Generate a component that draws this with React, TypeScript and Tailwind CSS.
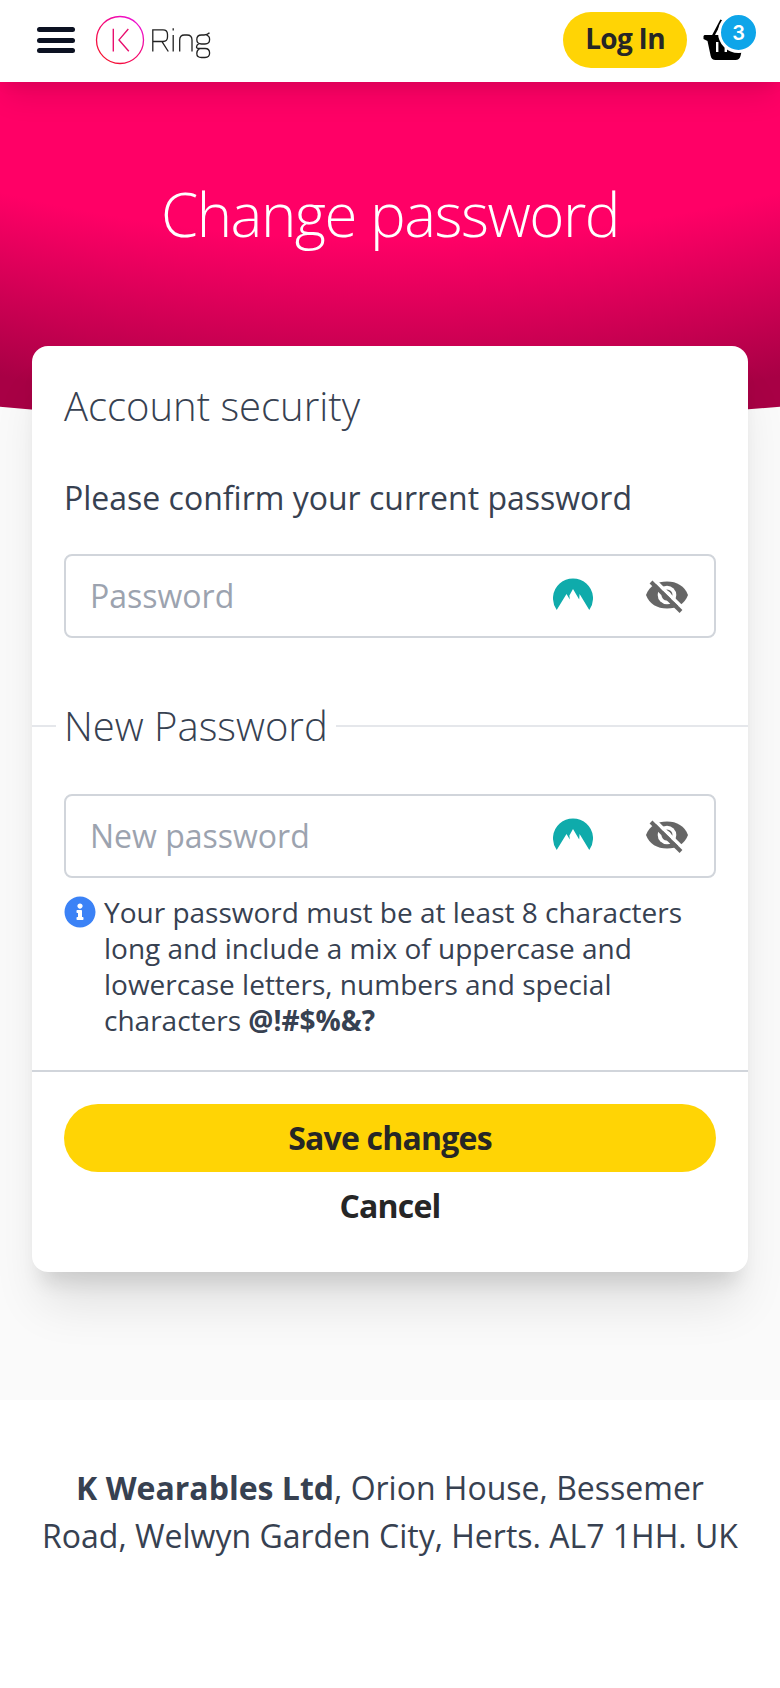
import { FaInfoCircle } from "react-icons/fa";

function Logo() {
  return (
    <svg className="ml-5 h-[52px] w-[120px]" viewBox="0 0 120 52" fill="none">
      <defs>
        <linearGradient id="ring" x1="8" y1="46" x2="42" y2="6" gradientUnits="userSpaceOnUse">
          <stop offset="0" stopColor="#f5122a" />
          <stop offset="0.5" stopColor="#f5086f" />
          <stop offset="1" stopColor="#ec10d8" />
        </linearGradient>
      </defs>
      <circle cx="25" cy="26" r="23.5" stroke="url(#ring)" strokeWidth="1.3" />
      <path d="M18.3 14.8V37.5M33.3 15L24 25.9L33.8 37.2" stroke="#e8106e" strokeWidth="1.4" />
      <g stroke="#222" strokeWidth="1.3">
        <path d="M57.8 37.5V15.8H68Q72.5 15.8 72.5 20.5V23Q72.5 27.5 68 27.5H58M67 27.6L73.3 37.5" />
        <path d="M78.2 21V37.5M78.2 14.3V16.4" />
        <path d="M84.7 37.5V26Q84.7 21 89.5 21H92Q97 21 97 26V37.5" />
        <path d="M114.5 18.8Q112.5 21 109 21H106.500Q101.800 21 101.800 25.500T106.500 30H110Q114.600 30 114.600 25.500Q114.600 22 111.500 21.200M104 29.500Q101.500 31 101.500 33Q101.500 34.500 104 34.500H110Q114.600 34.500 114.600 39Q114.600 43.500 110 43.500H106.500Q101.800 43.500 101.800 39.500Q101.800 36 104.500 34.600" />
      </g>
    </svg>
  );
}

function NordIcon() {
  return (
    <svg className="mb-1 h-8 w-10 shrink-0" viewBox="0 0 40 32">
      <path
        fill="#0fabab"
        d="M3.700 32A20 20 0 1 1 36.300 32L26.600 16L26.200 21.600L20 11L16.400 17.500L16.800 21.600L13.500 16Z"
      />
    </svg>
  );
}

function EyeOffIcon() {
  return (
    <svg className="ml-[53px] mr-[2px] h-[33px] w-[42px] shrink-0" viewBox="0 0 42 33" fill="none">
      <path d="M0 15C3.500 6 11 1.500 21 1.500S38.500 6 42 15C38.500 24 31 28.500 21 28.500S3.500 24 0 15Z" fill="#666" />
      <circle cx="21" cy="15" r="9.300" fill="#fff" />
      <circle cx="21" cy="15" r="5.500" fill="#666" />
      <path d="M21 12A3.500 3.500 0 0 1 24.500 15.500" stroke="#fff" strokeWidth="1.500" />
      <path d="M7 -1.300L39.500 30.700" stroke="#fff" strokeWidth="3.500" />
      <path d="M5 2L35 31.500" stroke="#666" strokeWidth="4" />
    </svg>
  );
}

function PasswordField({ placeholder }: { placeholder: string }) {
  return (
    <div className="flex h-[84px] items-center rounded-lg border-2 border-[#d1d5db] px-6">
      <input
        className="min-w-0 flex-1 text-[32px] leading-[48px] outline-none placeholder:text-[#9ca3af]"
        placeholder={placeholder}
      />
      <NordIcon />
      <EyeOffIcon />
    </div>
  );
}

export default function App() {
  return (
    <div className="min-h-[1688px] bg-white font-['Open_Sans',sans-serif] text-[#374151]">
      <header className="relative z-10 flex h-[82px] items-center bg-white pb-[2px] pl-[37px] pr-4 shadow-[0_20px_30px_-6px_rgba(0,0,0,0.1),0_8px_12px_-4px_rgba(0,0,0,0.06)]">
        <div className="flex w-[38px] flex-col gap-[5.500px]">
          <span className="h-[5px] rounded-full bg-[#0c1222]" />
          <span className="h-[5px] rounded-full bg-[#0c1222]" />
          <span className="h-[5px] rounded-full bg-[#0c1222]" />
        </div>
        <Logo />
        <button className="ml-auto h-14 w-[124px] rounded-full bg-[#ffd405] pb-[3px] text-[28px] font-bold leading-[53px] tracking-[-0.7px] text-[#262626]">
          Log In
        </button>
        <div className="relative ml-4 h-[52px] w-[61px]">
          <svg className="h-full w-full" viewBox="0 0 61 52">
            <path d="M1.500 21H42.500Q43.500 21 43.500 24L41 27L37.500 42Q36.500 46 32.500 46H12.500Q8.500 46 7.700 42L4.500 27L.5 25V22Z" />
            <path d="M9.500 23L18.500 6" stroke="#000" strokeWidth="2.600" />
            <path d="M14.200 28V38M22.800 28V38M31 28V38" stroke="#fff" strokeWidth="2.400" />
          </svg>
          <span className="absolute left-[15px] top-[-2px] flex h-[41px] w-[41px] items-center justify-center rounded-full border-[3.500px] border-white bg-[#0ea5e9] font-['Inter',sans-serif] text-[20px] font-semibold text-white">
            3
          </span>
        </div>
      </header>
      <main className="h-[1318px] bg-[#fafafa]">
        <section className="flex h-[342px] justify-center bg-[radial-gradient(circle_1795px_at_50%_-1458px,#ff0066_90%,#a80045_100%)] pt-[84px] [clip-path:circle(4150px_at_50%_-3807px)]">
          <h1 className="text-[60px] font-light leading-[96px] tracking-[-1.500px] text-white">
            Change password
          </h1>
        </section>
        <section className="relative mx-8 -mt-[78px] h-[926px] rounded-2xl bg-white px-8 shadow-[0_40px_50px_-10px_rgba(0,0,0,0.11),0_20px_20px_-10px_rgba(0,0,0,0.11)]">
          <h2 className="pt-8 text-[40px] font-light leading-[56px]">Account security</h2>
          <p className="mb-[32px] mt-[40px] text-[32px] leading-[48px]">Please confirm your current password</p>
          <PasswordField placeholder="Password" />
          <div className="-mx-8 mb-10 mt-[60px] flex h-[56px] items-center text-[40px] font-light">
            <span className="h-[2px] w-6 bg-[#e5e7eb]" />
            <h2 className="px-2 leading-[56px]">New Password</h2>
            <span className="h-[2px] flex-1 bg-[#e5e7eb]" />
          </div>
          <PasswordField placeholder="New password" />
          <div className="mt-4 flex gap-2 text-[28px] leading-9">
            <FaInfoCircle className="mt-[2px] h-8 w-8 shrink-0 text-[#3b82f6]" />
            <p>
              Your password must be at least 8 characters long and include a mix of uppercase and lowercase letters,
              numbers and special characters <b>@!#$%&amp;?</b>
            </p>
          </div>
          <div className="-mx-8 mt-8 flex flex-col border-t-2 border-[#d1d5db] px-8 pt-8 text-[32px] font-bold tracking-[-0.800px] text-[#262626]">
            <button className="h-[68px] rounded-full bg-[#ffd405]">Save changes</button>
            <button className="h-[68px]">Cancel</button>
          </div>
        </section>
      </main>
      <footer className="px-8 pt-16 text-center text-[32px] leading-[48px]">
        <b>K Wearables Ltd</b>, Orion House, Bessemer Road, Welwyn Garden City, Herts. AL7 1HH. UK
      </footer>
    </div>
  );
}
